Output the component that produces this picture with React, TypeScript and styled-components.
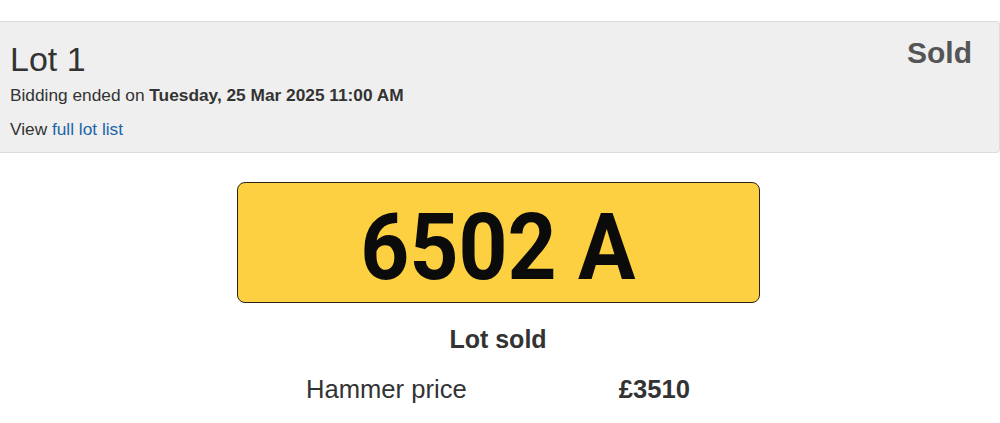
import React from "react";
import styled, { createGlobalStyle } from "styled-components";

const Global = createGlobalStyle`
  html, body { margin: 0; padding: 0; background: #fff; }
  body { font-family: "Liberation Sans", Arial, sans-serif; color: #333; }
`;

const Page = styled.div`
  padding-top: 21px;
`;

const Header = styled.section`
  display: flex;
  justify-content: space-between;
  align-items: flex-start;
  background: #efefef;
  border: 1px solid #dcdcdc;
  border-left: none;
  border-radius: 0 4px 4px 0;
  padding: 14px 27px 11px 10px;
`;

const HeaderMain = styled.div`
  display: flex;
  flex-direction: column;
  padding-top: 5px;
`;

const Title = styled.h1`
  margin: 0;
  font-size: 34px;
  line-height: 37px;
  font-weight: 400;
  color: #333;
`;

const Ended = styled.div`
  margin-top: 5px;
  font-size: 17.3px;
  line-height: 24px;
  b { font-weight: 700; }
`;

const ViewLine = styled.div`
  margin-top: 10px;
  font-size: 17.3px;
  line-height: 24px;
`;

const Link = styled.a`
  color: #1c65aa;
  text-decoration: none;
`;

const Status = styled.div`
  font-size: 30px;
  line-height: 33px;
  font-weight: 700;
  color: #555;
`;

const Body = styled.main`
  display: flex;
  flex-direction: column;
  align-items: center;
  padding-top: 29px;
  padding-right: 4px;
`;

const Plate = styled.div`
  box-sizing: border-box;
  width: 523px;
  height: 121px;
  background: #fdd042;
  border: 1px solid #2a2418;
  border-radius: 8px;
  display: flex;
  align-items: center;
  justify-content: center;
`;

const PlateText = styled.span`
  font-family: Roboto, "Liberation Sans", sans-serif;
  font-weight: 700;
  font-size: 92px;
  line-height: 1;
  color: #0b0b0b;
  white-space: pre;
  transform: scaleX(0.93);
  margin-top: 10px;
`;

const Result = styled.h2`
  margin: 21px 0 0;
  font-size: 25px;
  line-height: 30px;
  font-weight: 700;
  color: #333;
`;

const PriceRow = styled.div`
  margin-top: 20px;
  width: 384px;
  display: grid;
  grid-template-columns: 1fr auto;
  font-size: 25.6px;
  line-height: 30px;
`;

const PriceLabel = styled.span`
  font-weight: 400;
`;

const PriceValue = styled.span`
  font-weight: 700;
  text-align: right;
`;

export default function App() {
  return (
    <>
      <Global />
      <Page>
        <Header>
          <HeaderMain>
            <Title>Lot 1</Title>
            <Ended>
              Bidding ended on <b>Tuesday, 25 Mar 2025 11:00 AM</b>
            </Ended>
            <ViewLine>
              View <Link href="#">full lot list</Link>
            </ViewLine>
          </HeaderMain>
          <Status>Sold</Status>
        </Header>
        <Body>
          <Plate>
            <PlateText>6502 A</PlateText>
          </Plate>
          <Result>Lot sold</Result>
          <PriceRow>
            <PriceLabel>Hammer price</PriceLabel>
            <PriceValue>£3510</PriceValue>
          </PriceRow>
        </Body>
      </Page>
    </>
  );
}
